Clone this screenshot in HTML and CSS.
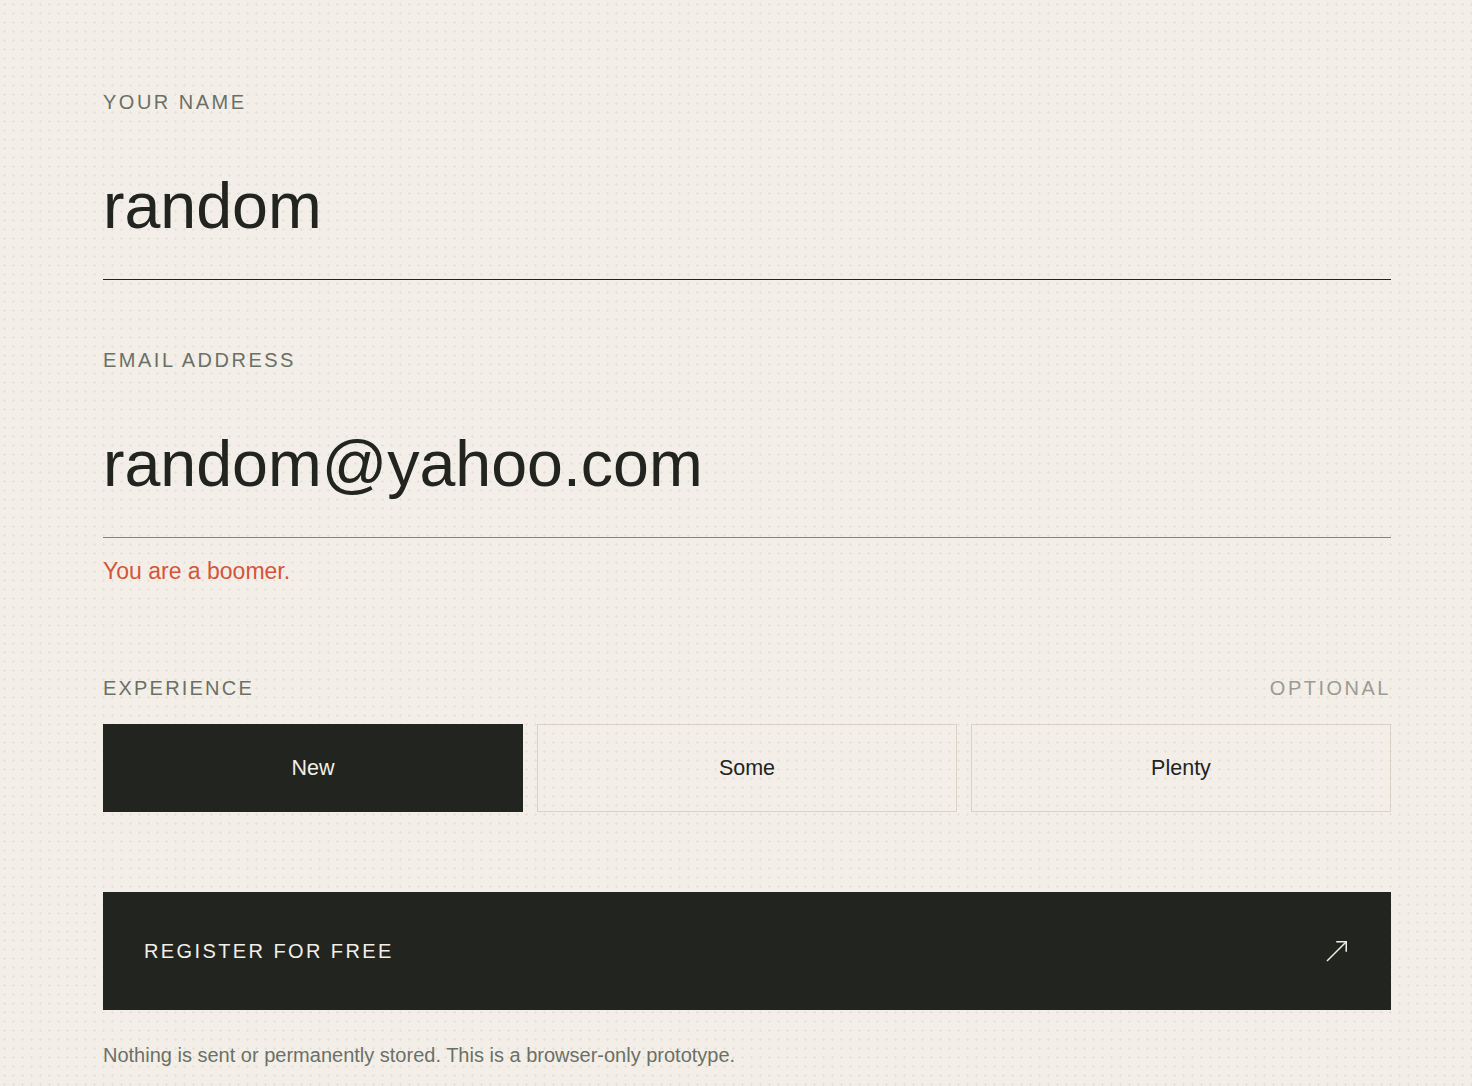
FILE: index.html
```html
<!DOCTYPE html>
<html lang="en">
<head>
<meta charset="utf-8">
<title>Register</title>
<link rel="stylesheet" href="styles.css">
</head>
<body>
<main class="form">
  <div class="field">
    <label class="label" for="name">Your name</label>
    <div class="control">
      <input class="input" id="name" type="text" value="random">
    </div>
  </div>
  <div class="field field-email">
    <label class="label" for="email">Email address</label>
    <div class="control control-error">
      <input class="input" id="email" type="text" value="random@yahoo.com">
    </div>
    <p class="error">You are a boomer.</p>
  </div>
  <div class="experience">
    <div class="exp-head">
      <span class="label label-exp">Experience</span>
      <span class="label optional">Optional</span>
    </div>
    <div class="options">
      <button class="option selected" type="button">New</button>
      <button class="option" type="button">Some</button>
      <button class="option" type="button">Plenty</button>
    </div>
  </div>
  <button class="submit" type="button">
    <span class="submit-text">Register for free</span>
    <svg class="arrow" width="24" height="24" viewBox="0 0 24 24" fill="none" stroke="currentColor" stroke-width="1.5" stroke-linecap="square">
      <path d="M2.5 21.5 L21 3"/>
      <path d="M12 2.75 H21.25 V12"/>
    </svg>
  </button>
  <p class="note">Nothing is sent or permanently stored. This is a browser-only prototype.</p>
</main>
</body>
</html>
```
FILE: styles.css
```css
html, body {
  margin: 0;
  padding: 0;
}
body {
  background-color: #f3efe8;
  background-image: url("data:image/svg+xml,%3Csvg xmlns='http://www.w3.org/2000/svg' width='9' height='9'%3E%3Cpath d='M4 3h1v3H4zM3 4h3v1H3z' fill='%23e7e2d8'/%3E%3C/svg%3E");
  background-size: 9px 9px;
  font-family: "Liberation Sans", Arial, Helvetica, sans-serif;
  color: #22241f;
  min-height: 1086px;
}
.form {
  width: 1288px;
  padding: 90px 0 0 103px;
  display: flex;
  flex-direction: column;
}
.field {
  display: flex;
  flex-direction: column;
}
.label {
  display: block;
  font-size: 20px;
  line-height: 24px;
  letter-spacing: 0.125em;
  text-transform: uppercase;
  color: #6b7066;
}
.control {
  margin-top: 52px;
  padding-bottom: 33px;
  border-bottom: 1px solid #22241f;
}
.field-email .control-error {
  border-bottom: 1px solid #e0603f;
}
.input {
  display: block;
  box-sizing: border-box;
  width: 100%;
  height: 80px;
  margin: 0;
  padding: 0;
  border: 0;
  background: transparent;
  font-family: "Liberation Sans", Arial, Helvetica, sans-serif;
  font-size: 64.5px;
  line-height: 80px;
  color: #22241f;
  outline: none;
}
.field-email {
  margin-top: 68px;
}
.error {
  margin: 20px 0 0;
  font-size: 23px;
  line-height: 26px;
  color: #d4553a;
}
.experience {
  margin-top: 92px;
}
.exp-head {
  display: flex;
  justify-content: space-between;
}
.label-exp {
  letter-spacing: 0.11em;
}
.optional {
  color: #9a9b92;
}
.options {
  display: grid;
  grid-template-columns: repeat(3, 1fr);
  gap: 14px;
  margin-top: 24px;
}
.option {
  height: 88px;
  border: 1px solid #d8d3c6;
  background: transparent;
  font-family: "Liberation Sans", Arial, Helvetica, sans-serif;
  font-size: 21.5px;
  color: #22241f;
  padding: 0;
  cursor: pointer;
}
.option.selected {
  background: #22241f;
  border-color: #22241f;
  color: #f3efe8;
}
.submit {
  margin-top: 80px;
  height: 118px;
  display: flex;
  align-items: center;
  justify-content: space-between;
  padding: 0 42px 0 41px;
  border: 0;
  background: #22241f;
  color: #f3efe8;
  font-family: "Liberation Sans", Arial, Helvetica, sans-serif;
  cursor: pointer;
}
.submit-text {
  font-size: 20px;
  letter-spacing: 0.12em;
  text-transform: uppercase;
}
.arrow {
  display: block;
  width: 24px;
  height: 24px;
}
.note {
  margin: 33px 0 0;
  font-size: 20px;
  line-height: 24px;
  color: #6b7066;
}
```
